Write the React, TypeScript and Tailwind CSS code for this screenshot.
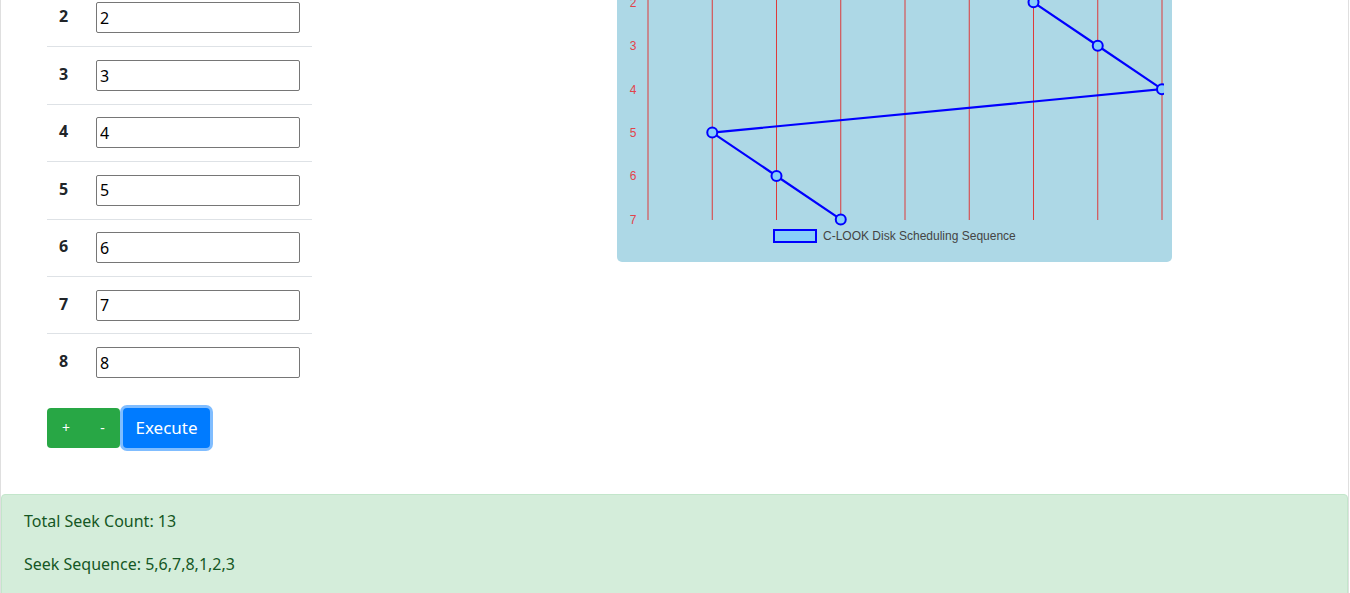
import { useState } from 'react';

const ROWS = [2, 3, 4, 5, 6, 7, 8];

// chart geometry (px inside the chart panel)
const colX = (i: number) => 31 + 64.25 * i;
const stepY = (s: number) => 2.3 + (s - 2) * 43.42;

// seek sequence drawn in step order: [column, step]
const POINTS: [number, number][] = [
  [5, 1],
  [6, 2],
  [7, 3],
  [8, 4],
  [1, 5],
  [2, 6],
  [3, 7],
];

const Chart = () => {
  const path = POINTS.map(([c, s], i) => `${i === 0 ? 'M' : 'L'}${colX(c)} ${stepY(s)}`).join(' ');
  return (
    <div className="w-[555px] h-[262px] bg-[#add8e6] rounded-b-[5px] overflow-hidden">
      <svg width="555" height="262" viewBox="0 0 555 262">
        <defs>
          <clipPath id="plot">
            <rect x="0" y="0" width="547" height="262" />
          </clipPath>
        </defs>
        {[2, 3, 4, 5, 6, 7].map(s => (
          <text
            key={s}
            x="16"
            y={stepY(s) + 4.5}
            textAnchor="middle"
            fontSize="12"
            fontFamily="Liberation Sans, Arial, sans-serif"
            fill="#e2434b"
          >
            {s}
          </text>
        ))}
        {Array.from({ length: 9 }, (_, i) => (
          <line key={i} x1={colX(i)} y1="0" x2={colX(i)} y2="220" stroke="#dd3a3a" strokeWidth="1" />
        ))}
        <g clipPath="url(#plot)">
          <path d={path} fill="none" stroke="#0000ff" strokeWidth="2.2" />
          {POINTS.map(([c, s]) => (
            <circle key={`${c}-${s}`} cx={colX(c)} cy={stepY(s)} r="5" fill="#87cefa" stroke="#0000ff" strokeWidth="2" />
          ))}
        </g>
        <rect x="157" y="230" width="42" height="12" fill="#87cefa" stroke="#0000ff" strokeWidth="2" />
        <text x="206" y="240" fontSize="12" fontFamily="Liberation Sans, Arial, sans-serif" fill="#444">
          C-LOOK Disk Scheduling Sequence
        </text>
      </svg>
    </div>
  );
};

const App = () => {
  const [values, setValues] = useState<string[]>(ROWS.map(String));

  return (
    <div className="h-[593px] overflow-hidden bg-white font-['Segoe_UI','Noto_Sans',sans-serif] text-[#212529]">
      <div className="w-[1349px] border-x border-[#dfdfdf]">
        <div className="flex h-[494px]">
          <div className="w-[616px] pl-[46px]">
            <div className="w-[265px] -mt-[11px]">
              {ROWS.map((n, i) => (
                <div
                  key={n}
                  className={`flex items-center h-[57.4px] px-3 ${i > 0 ? 'border-t border-[#dee2e6]' : ''}`}
                >
                  <span className="w-[37px] font-bold text-[16px] -mt-[3px]">{n}</span>
                  <input
                    value={values[i]}
                    onChange={e => setValues(v => v.map((x, j) => (j === i ? e.target.value : x)))}
                    className="w-[204px] h-[31px] border border-[#767676] rounded-[2px] px-[3px] text-[16px] text-black outline-none"
                  />
                </div>
              ))}
            </div>
            <div className="flex items-center mt-[17px]">
              <div className="flex h-[40px] rounded-[4px] bg-[#28a745] overflow-hidden">
                <button className="w-[38px] text-white text-[14px]">+</button>
                <button className="w-[35px] text-white text-[14px]">-</button>
              </div>
              <button className="ml-[3px] h-[40px] w-[87px] rounded-[4px] bg-[#007bff] text-white text-[17px] ring-[3px] ring-[#80bdff]">
                Execute
              </button>
            </div>
          </div>
          <div>
            <Chart />
          </div>
        </div>
        <div className="h-[120px] border border-[#c3e6cb] rounded-[4px] bg-[#d4edda] text-[#155724] pl-[22px] pr-5 pt-[14px] text-[16px]">
          <p className="leading-6 mb-[19px]">Total Seek Count: 13</p>
          <p className="leading-6">Seek Sequence: 5,6,7,8,1,2,3</p>
        </div>
      </div>
    </div>
  );
};

export default App;
